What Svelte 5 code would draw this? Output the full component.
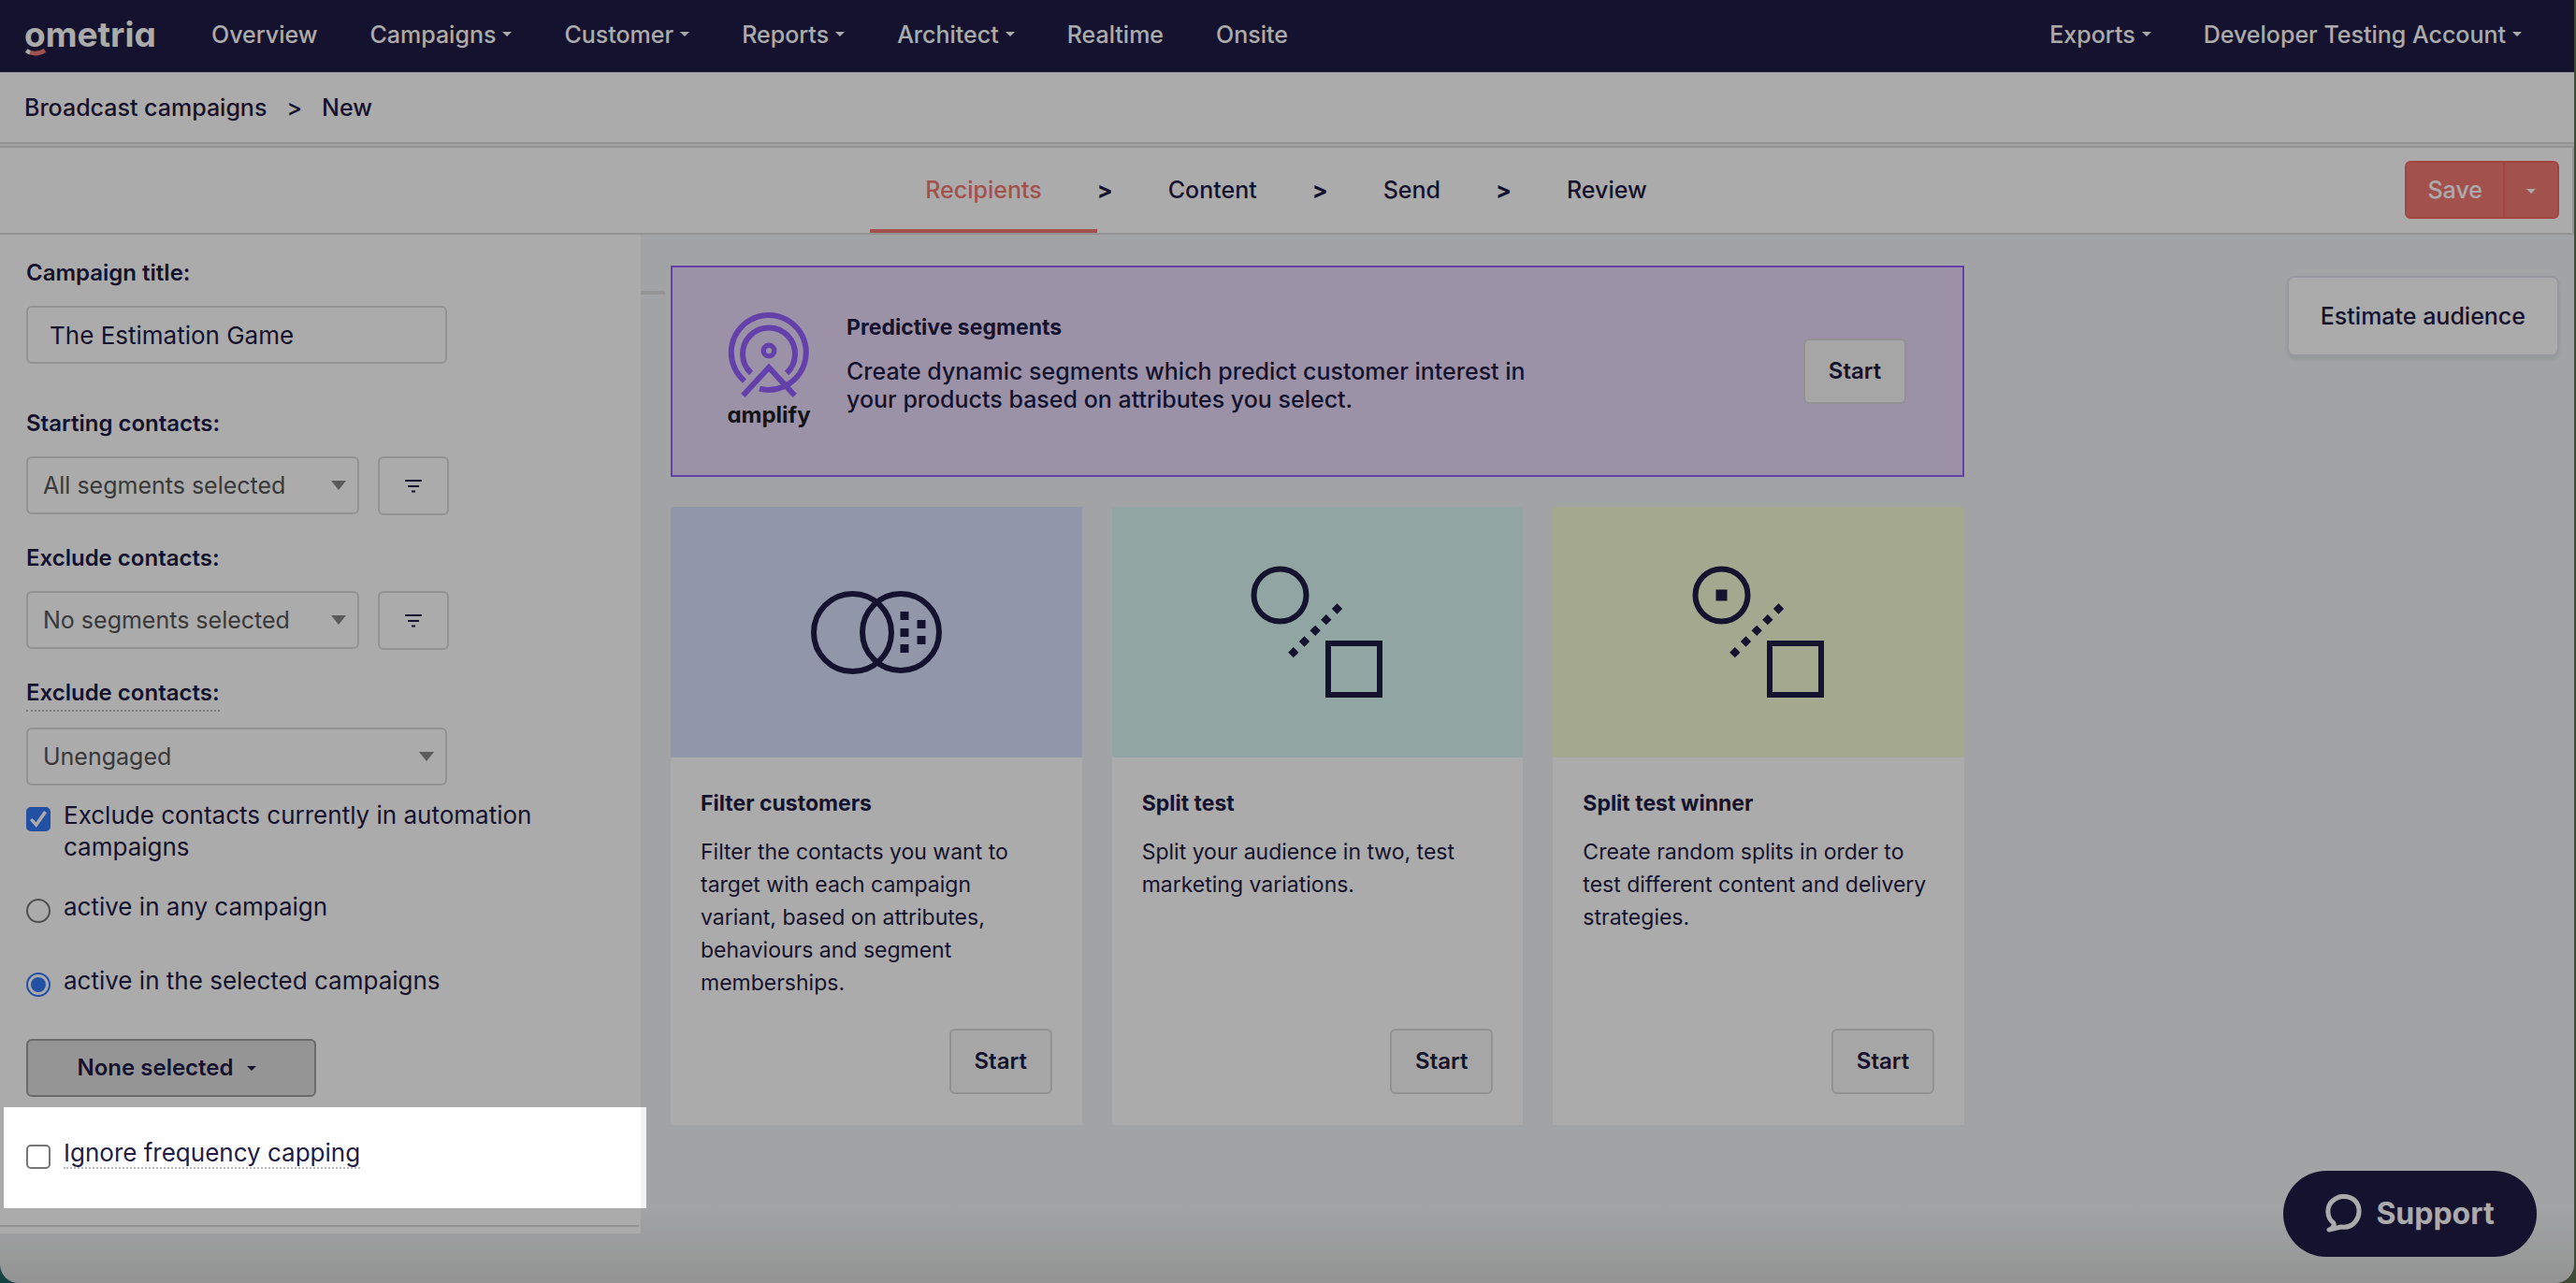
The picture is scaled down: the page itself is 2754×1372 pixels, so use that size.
<script lang="ts">
	type Link = { label: string; menu: boolean };

	const mainLinks: Link[] = [
		{ label: 'Overview', menu: false },
		{ label: 'Campaigns', menu: true },
		{ label: 'Customer', menu: true },
		{ label: 'Reports', menu: true },
		{ label: 'Architect', menu: true },
		{ label: 'Realtime', menu: false },
		{ label: 'Onsite', menu: false }
	];

	const accountLinks: Link[] = [
		{ label: 'Exports', menu: true },
		{ label: 'Developer Testing Account', menu: true }
	];

	const steps = ['Recipients', 'Content', 'Send', 'Review'];

	const cards = [
		{
			kind: 'filter',
			title: 'Filter customers',
			text: 'Filter the contacts you want to target with each campaign variant, based on attributes, behaviours and segment memberships.'
		},
		{
			kind: 'split',
			title: 'Split test',
			text: 'Split your audience in two, test marketing variations.'
		},
		{
			kind: 'winner',
			title: 'Split test winner',
			text: 'Create random splits in order to test different content and delivery strategies.'
		}
	];

	let currentStep = $state('Recipients');
	let title = $state('The Estimation Game');
	let excludeAutomation = $state(true);
	let scope = $state('selected');
	let ignoreCapping = $state(false);
</script>

{#snippet navLink(link: Link)}
	<a href="#{link.label}" class="nav-link">
		{link.label}
		{#if link.menu}<span class="caret"></span>{/if}
	</a>
{/snippet}

{#snippet segmentRow(id: string, label: string, value: string)}
	<div class="field">
		<label class="label" for={id}>{label}</label>
		<div class="segment-row">
			<div class="select">
				<select {id}><option>{value}</option></select>
			</div>
			<button class="filter-btn" aria-label="Filter segments">
				<svg width="18" height="14" viewBox="0 0 18 14">
					<path d="M0 1h18M3 7h12M7 12.5h4" stroke="currentColor" stroke-width="2" />
				</svg>
			</button>
		</div>
	</div>
{/snippet}

<div class="window">
	<header class="topbar">
		<a href="#home" class="logo">
			ometria
			<svg class="smile" width="24" height="10" viewBox="0 0 24 10" fill="none" stroke-width="4.6">
				<path d="M2.2 2Q4 3.4 6.4 4.3" stroke="#fff" />
				<path d="M6.2 4.2Q14 7 22 1.8" stroke="#f27972" />
			</svg>
		</a>
		<nav class="nav">
			{#each mainLinks as link}
				{@render navLink(link)}
			{/each}
		</nav>
		<nav class="nav account">
			{#each accountLinks as link}
				{@render navLink(link)}
			{/each}
		</nav>
	</header>

	<div class="breadcrumb">
		<a href="#campaigns">Broadcast campaigns</a>
		<span>&gt;</span>
		<span>New</span>
	</div>

	<div class="stepbar">
		<nav class="steps">
			{#each steps as step, i}
				{#if i > 0}<span class="arrow">&gt;</span>{/if}
				<button
					class="step"
					class:active={step === currentStep}
					onclick={() => (currentStep = step)}>{step}</button
				>
			{/each}
		</nav>
		<div class="save-group">
			<button class="save">Save</button>
			<button class="save-more" aria-label="More save options"><span class="caret"></span></button>
		</div>
	</div>

	<div class="body">
		<aside class="sidebar">
			<div class="field">
				<label class="label" for="title">Campaign title:</label>
				<input id="title" class="text-input" type="text" bind:value={title} />
			</div>

			<div class="segments">
				{@render segmentRow('starting', 'Starting contacts:', 'All segments selected')}
				{@render segmentRow('excluded', 'Exclude contacts:', 'No segments selected')}
				<div class="field">
					<label class="label hint" for="engagement">Exclude contacts:</label>
					<div class="select wide">
						<select id="engagement"><option>Unengaged</option></select>
					</div>
				</div>
			</div>

			<label class="check">
				<input type="checkbox" bind:checked={excludeAutomation} />
				<span>Exclude contacts currently in automation campaigns</span>
			</label>

			<div class="radios">
				<label class="check">
					<input type="radio" name="scope" value="any" bind:group={scope} />
					<span>active in any campaign</span>
				</label>
				<label class="check">
					<input type="radio" name="scope" value="selected" bind:group={scope} />
					<span>active in the selected campaigns</span>
				</label>
				<button class="picker">None selected <span class="caret"></span></button>
			</div>

			<div class="spotlight">
				<label class="check">
					<input type="checkbox" bind:checked={ignoreCapping} />
					<span class="hint">Ignore frequency capping</span>
				</label>
			</div>
			<hr />
		</aside>

		<main class="content">
			<div class="options">
				<section class="banner">
					<div class="amplify">
						<svg width="88" height="94" viewBox="0 0 88 94" fill="none" stroke="#9560ff" stroke-width="6">
							<path d="M18 75.5A40 40 0 1 1 34 83.7" />
							<path d="M25 67A28 28 0 1 1 63 67" />
							<circle cx="44" cy="43" r="5.8" stroke-width="5.4" />
							<path d="M16.3 91L44 61L71.7 91" />
						</svg>
						<span>amplify</span>
					</div>
					<div class="banner-text">
						<h2>Predictive segments</h2>
						<p>
							Create dynamic segments which predict customer interest in your products based on
							attributes you select.
						</p>
					</div>
					<button class="start">Start</button>
				</section>

				<div class="cards">
					{#each cards as card}
						<section class="card">
							<div class="art {card.kind}">
								<svg width="150" height="150" viewBox="0 0 150 150" fill="none" stroke="currentColor" stroke-width="6">
									{#if card.kind === 'filter'}
										<circle cx="49.5" cy="75.5" r="41.5" />
										<circle cx="101" cy="75" r="41" />
										<path d="M105 53v9M105 71v9M105 88v9M123 62v9M123 79v9" stroke-width="9" />
									{:else}
										<circle cx="35.5" cy="35.5" r="28" />
										{#if card.kind === 'winner'}
											<path d="M29.5 35.5h12" stroke-width="12" />
										{/if}
										<path d="M47 99.5L101 45.5" stroke-width="8" stroke-dasharray="8 8.5" />
										<rect x="87" y="87" width="55" height="55" />
									{/if}
								</svg>
							</div>
							<div class="card-body">
								<h3>{card.title}</h3>
								<p>{card.text}</p>
								<button class="start">Start</button>
							</div>
						</section>
					{/each}
				</div>
			</div>

			<button class="estimate">Estimate audience</button>
		</main>
	</div>

	<button class="support">
		<svg width="40" height="42" viewBox="0 0 40 42" fill="none" stroke="currentColor" stroke-width="5" stroke-linejoin="round">
			<path d="M9 31C1 25 1 13 8 7C17 -1 31 2 35 12C39 25 30 37 17 35L4 38Q10 36 9 31Z" />
		</svg>
		Support
	</button>
</div>

<style>
	:global(body) {
		background: linear-gradient(90deg, #1b6463, #59564e 60%, #5f7050);
	}

	.window {
		--navy: #1f1c45;
		--line: #dadada;
		--coral: #f27972;
		position: relative;
		display: flex;
		flex-direction: column;
		min-height: 100vh;
		margin-right: 2px;
		box-sizing: border-box;
		background: linear-gradient(to top, #dcdcdc, #f1f3f5 80px);
		border-radius: 0 0 20px 20px;
		color: var(--navy);
		font-family: Inter, 'Open Sans', sans-serif;
		font-size: 25px;
		line-height: 30px;
	}

	a {
		color: inherit;
		text-decoration: none;
	}

	button,
	input,
	select {
		box-sizing: border-box;
		margin: 0;
		font: inherit;
		color: inherit;
	}

	button {
		cursor: pointer;
	}

	h2,
	h3,
	p {
		margin: 0;
	}

	.caret {
		display: inline-block;
		border: 5px solid transparent;
		border-top-color: currentColor;
		border-bottom: 0;
	}

	/* header */

	.topbar {
		display: flex;
		align-items: center;
		height: 77px;
		padding: 0 56px 4px 26px;
		box-sizing: border-box;
		background: var(--navy);
		color: #fff;
	}

	.logo {
		position: relative;
		width: 140px;
		margin-right: 60px;
		font-size: 37px;
		font-weight: 700;
		font-feature-settings: 'cv11';
	}

	.smile {
		position: absolute;
		left: 0;
		top: 30px;
	}

	.nav {
		display: flex;
		gap: 56px;
		font-weight: 500;
	}

	.nav-link {
		display: flex;
		align-items: center;
		gap: 7px;
	}

	.account {
		margin-left: auto;
	}

	.breadcrumb {
		display: flex;
		gap: 21px;
		padding: 22px 26px;
		border-top: 1px solid var(--line);
		border-bottom: 2px solid var(--line);
		background: #fff;
		font-weight: 500;
	}

	.stepbar {
		display: grid;
		grid-template-columns: 1fr auto 1fr;
		align-items: center;
		height: 95px;
		margin-top: 2px;
		box-sizing: border-box;
		border: 2px solid var(--line);
		border-left: 0;
		background: #fff;
		font-weight: 500;
	}

	.steps {
		grid-column: 2;
		display: flex;
		align-items: center;
		align-self: stretch;
	}

	.step {
		align-self: stretch;
		padding: 0 59px 2px;
		border: 0;
		background: none;
	}

	.step.active {
		color: var(--coral);
		box-shadow: inset 0 -4px var(--coral);
	}

	.arrow {
		padding-bottom: 2px;
		font-weight: 700;
	}

	.save-group {
		display: flex;
		justify-self: end;
		height: 62px;
		margin: 0 14px 2px 0;
		border: 2px solid #f5665f;
		border-radius: 6px;
		box-sizing: border-box;
		background: var(--coral);
		color: #fff;
	}

	.save,
	.save-more {
		border: 0;
		background: none;
	}

	.save {
		padding: 0 22px;
	}

	.save-more {
		width: 58px;
		padding: 0;
		border-left: 2px solid #f5665f;
	}

	.save-more .caret {
		vertical-align: middle;
	}

	/* sidebar */

	.body {
		display: flex;
		align-items: flex-start;
	}

	.sidebar {
		width: 685px;
		padding: 26px 0 7px;
		box-sizing: border-box;
		background: #fff;
		font-size: 26px;
	}

	.field,
	.check,
	.radios {
		margin-left: 28px;
	}

	.field {
		display: flex;
		flex-direction: column;
		align-items: flex-start;
		gap: 20px;
	}

	.label {
		font-size: 24px;
		font-weight: 600;
	}

	.hint {
		border-bottom: 2px dotted #bbb;
	}

	.label.hint {
		padding-bottom: 3px;
		margin-bottom: -3px;
	}

	.text-input,
	.select {
		height: 62px;
		border: 2px solid var(--line);
		border-radius: 6px;
		box-sizing: border-box;
		background: #fff;
	}

	.text-input {
		width: 450px;
		padding: 0 23px;
	}

	.segments {
		display: flex;
		flex-direction: column;
		gap: 31px;
		margin-top: 49px;
	}

	.segment-row {
		display: flex;
		gap: 20px;
	}

	.select {
		position: relative;
		width: 356px;
	}

	.select.wide {
		width: 450px;
	}

	.select::after {
		content: '';
		position: absolute;
		right: 12px;
		top: 24px;
		border: 8px solid transparent;
		border-top: 10px solid #888;
		border-bottom: 0;
		pointer-events: none;
	}

	select {
		width: 100%;
		height: 100%;
		padding: 0 16px;
		border: 0;
		background: none;
		color: #555;
		font-size: 25px;
		appearance: none;
	}

	.filter-btn {
		display: flex;
		align-items: center;
		justify-content: center;
		width: 76px;
		height: 63px;
		border: 2px solid var(--line);
		border-radius: 6px;
		background: #fff;
	}

	.check {
		display: flex;
		align-items: flex-start;
		gap: 14px;
		width: 550px;
		margin-top: 15px;
		line-height: 34px;
	}

	.check input {
		position: relative;
		flex-shrink: 0;
		width: 26px;
		height: 26px;
		margin-top: 8px;
		border: 2px solid #767676;
		border-radius: 5px;
		background: #fff;
		appearance: none;
	}

	.check input:checked {
		border-color: #3478f6;
	}

	.check input[type='checkbox']:checked {
		background: #3478f6;
	}

	.check input[type='checkbox']:checked::after {
		content: '';
		position: absolute;
		inset: 2px;
		background: #fff;
		clip-path: polygon(0 56%, 14% 44%, 36% 68%, 84% 0, 100% 12%, 38% 100%);
	}

	.check input[type='radio'] {
		border-radius: 50%;
	}

	.check input[type='radio']:checked::after {
		content: '';
		position: absolute;
		inset: 3px;
		border-radius: 50%;
		background: #3478f6;
	}

	.radios {
		display: flex;
		flex-direction: column;
		gap: 45px;
		margin-top: 30px;
	}

	.radios .check {
		margin: 0;
	}

	.picker {
		display: flex;
		align-items: center;
		justify-content: center;
		gap: 14px;
		width: 310px;
		height: 62px;
		padding: 0 10px 0 0;
		border: 2px solid #9e9e9e;
		border-radius: 6px;
		background: #dfdfdf;
		font-size: 24px;
		font-weight: 600;
	}

	.spotlight {
		position: relative;
		padding: 28px 0 42px;
	}

	/* everything outside of the highlighted option is dimmed */
	.spotlight::after {
		content: '';
		position: absolute;
		inset: 11px -6px 0 4px;
		z-index: 10;
		box-shadow: 0 0 0 4000px rgba(0, 0, 0, 0.33);
		pointer-events: none;
	}

	.spotlight .hint {
		line-height: 30px;
		margin-top: 2px;
	}

	hr {
		margin: 18px 2px 0 0;
		border: 0;
		border-top: 2px solid var(--line);
	}

	/* content */

	.content {
		position: relative;
		flex: 1;
		display: grid;
		grid-template-columns: minmax(0, 1383px) auto;
		justify-content: space-between;
		align-items: start;
		padding: 33px 16px 0 32px;
	}

	.content::before {
		content: '';
		position: absolute;
		left: 0;
		top: 60px;
		width: 26px;
		height: 4px;
		background: #dedede;
	}

	.banner {
		display: flex;
		align-items: center;
		height: 226px;
		padding: 0 60px;
		border: 2px solid #9560ff;
		box-sizing: border-box;
		background: #e8dafb;
	}

	.amplify {
		display: flex;
		flex-direction: column;
		align-items: center;
		gap: 3px;
		width: 86px;
		margin-right: 40px;
		padding-bottom: 4px;
		color: #1e1e1e;
		font-size: 24px;
		font-weight: 700;
		font-feature-settings: 'cv11';
	}

	.amplify svg {
		flex-shrink: 0;
	}

	.banner-text {
		width: 740px;
		padding-bottom: 18px;
		font-weight: 500;
	}

	h2,
	h3 {
		font-size: 23px;
		font-weight: 700;
	}

	h2 {
		margin-bottom: 17px;
	}

	.start {
		height: 70px;
		width: 110px;
		padding: 0;
		margin-left: auto;
		border: 2px solid var(--line);
		border-radius: 6px;
		background: #f8f8f8;
		font-size: 24px;
		font-weight: 600;
	}

	.cards {
		display: grid;
		grid-template-columns: repeat(3, 1fr);
		gap: 32px;
		margin-top: 32px;
	}

	.card {
		display: flex;
		flex-direction: column;
		background: #fff;
	}

	.art {
		display: flex;
		align-items: center;
		justify-content: center;
		height: 268px;
	}

	.art.filter {
		background: #d8e0fb;
	}

	.art.split {
		background: #d9f8f2;
	}

	.art.winner {
		background: #f4fbd6;
	}

	.card-body {
		flex: 1;
		display: flex;
		flex-direction: column;
		min-height: 393px;
		padding: 34px 32px 33px;
		box-sizing: border-box;
	}

	.card-body p {
		max-width: 372px;
		margin: 20px 0 28px;
		font-size: 23px;
		line-height: 35px;
	}

	.card-body .start {
		margin-top: auto;
	}

	.estimate {
		height: 86px;
		margin-top: 11px;
		padding: 0 34px;
		border: 2px solid #e2e4ee;
		border-radius: 8px;
		box-shadow: 0 3px 4px rgba(0, 0, 0, 0.08);
		background: #fff;
		font-weight: 500;
	}

	.support {
		position: fixed;
		right: 42px;
		bottom: 28px;
		display: flex;
		align-items: center;
		justify-content: center;
		gap: 14px;
		width: 271px;
		height: 92px;
		padding: 0 8px;
		border: 0;
		border-radius: 46px;
		background: var(--navy);
		color: #fff;
		font-size: 32px;
		font-weight: 700;
	}
</style>
